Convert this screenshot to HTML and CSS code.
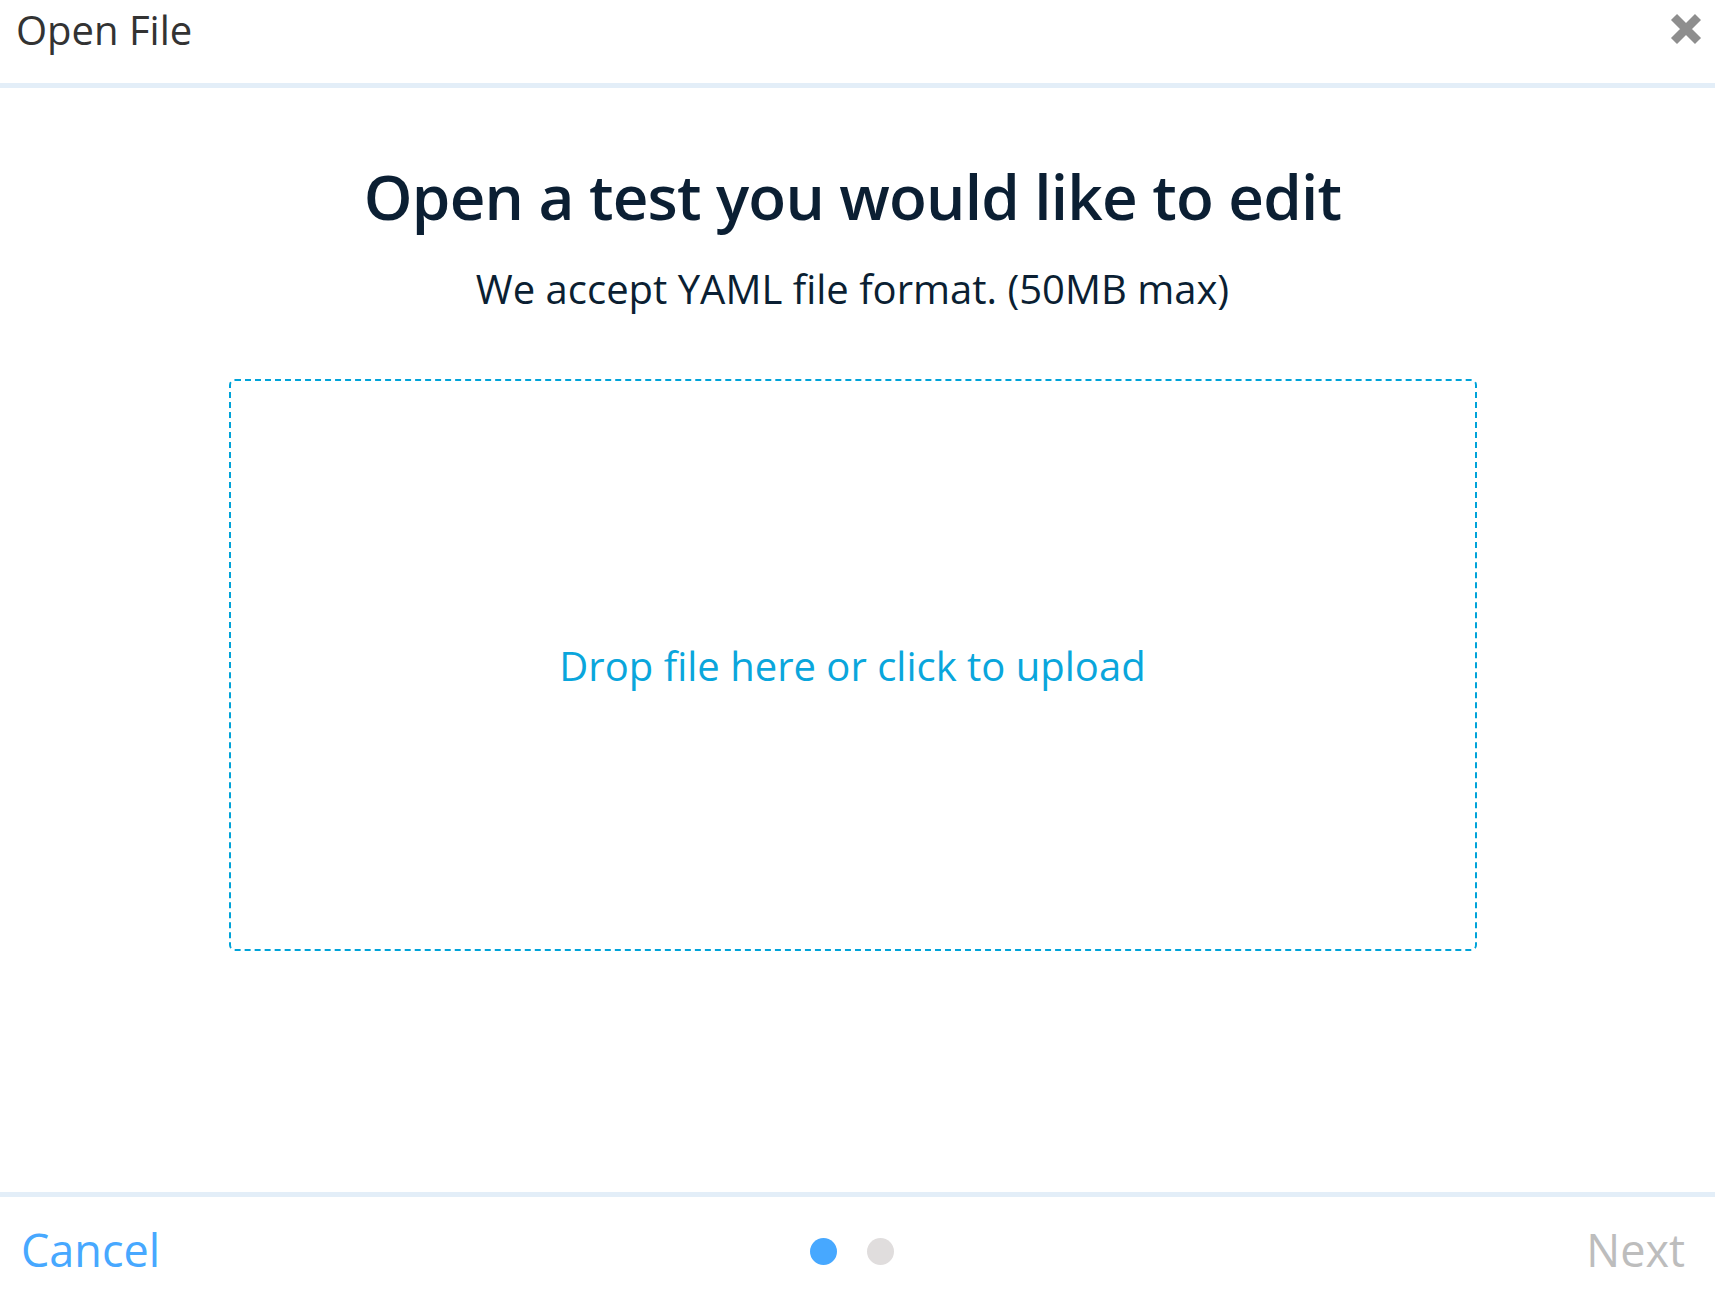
FILE: index.html
```html
<!DOCTYPE html>
<html>
<head>
<meta charset="utf-8">
<link rel="stylesheet" href="styles.css">
</head>
<body>
<div class="modal">
  <header class="modal-header">
    <div class="modal-title">Open File</div>
    <button class="close-btn" aria-label="Close">
      <svg width="34" height="34" viewBox="0 0 34 34"><path d="M5 5 L29 29 M29 5 L5 29" stroke="#8e8e8e" stroke-width="8.5" stroke-linecap="butt" fill="none"/></svg>
    </button>
  </header>
  <main class="modal-body">
    <h1 class="headline">Open a test you would like to edit</h1>
    <p class="subline">We accept YAML file format. (50MB max)</p>
    <div class="dropzone">
      <span class="dropzone-text">Drop file here or click to upload</span>
    </div>
  </main>
  <footer class="modal-footer">
    <a class="cancel">Cancel</a>
    <div class="dots"><span class="dot active"></span><span class="dot"></span></div>
    <a class="next">Next</a>
  </footer>
</div>
</body>
</html>
```
FILE: styles.css
```css
html, body {
  margin: 0;
  padding: 0;
  background: #fff;
}
body {
  font-family: "Open Sans", "Noto Sans", sans-serif;
  width: 1715px;
  height: 1290px;
  overflow: hidden;
}
.modal {
  display: flex;
  flex-direction: column;
  height: 1290px;
}
.modal-header {
  height: 88px;
  box-sizing: border-box;
  border-bottom: 5px solid #e3eef8;
  display: flex;
  justify-content: space-between;
  align-items: flex-start;
  padding: 0 12px 0 16px;
}
.modal-title {
  font-size: 40px;
  color: #333;
  line-height: 54px;
  margin-top: 3px;
}
.close-btn {
  border: 0;
  background: none;
  padding: 0;
  margin-top: 12px;
  width: 34px;
  height: 34px;
}
.modal-body {
  flex: 1;
  display: flex;
  flex-direction: column;
  align-items: center;
  padding-right: 10px;
}
.headline {
  margin: 66px 0 0;
  font-size: 62px;
  font-weight: 600;
  letter-spacing: -0.8px;
  color: #0b1f33;
  line-height: 84px;
}
.subline {
  margin: 24px 0 0;
  font-size: 40px;
  color: #0b1f33;
  line-height: 54px;
}
.dropzone {
  margin-top: 63px;
  width: 1248px;
  height: 572px;
  box-sizing: border-box;
  border: 2px dashed #00a3d9;
  border-radius: 6px;
  display: flex;
  align-items: center;
  justify-content: center;
}
.dropzone-text {
  font-size: 40px;
  color: #0aa6dc;
}
.modal-footer {
  height: 98px;
  box-sizing: border-box;
  border-top: 5px solid #e3eef8;
  display: flex;
  align-items: flex-start;
  justify-content: space-between;
  padding: 23px 30px 0 21px;
  position: relative;
}
.cancel {
  font-size: 45px;
  line-height: 60px;
  color: #47a8ff;
}
.next {
  font-size: 45px;
  line-height: 60px;
  color: #bdbdbd;
}
.dots {
  position: absolute;
  left: 810px;
  top: 41px;
  display: flex;
  gap: 30px;
}
.dot {
  width: 27px;
  height: 27px;
  border-radius: 50%;
  background: #e0dddd;
}
.dot.active {
  background: #47a8ff;
}
```
